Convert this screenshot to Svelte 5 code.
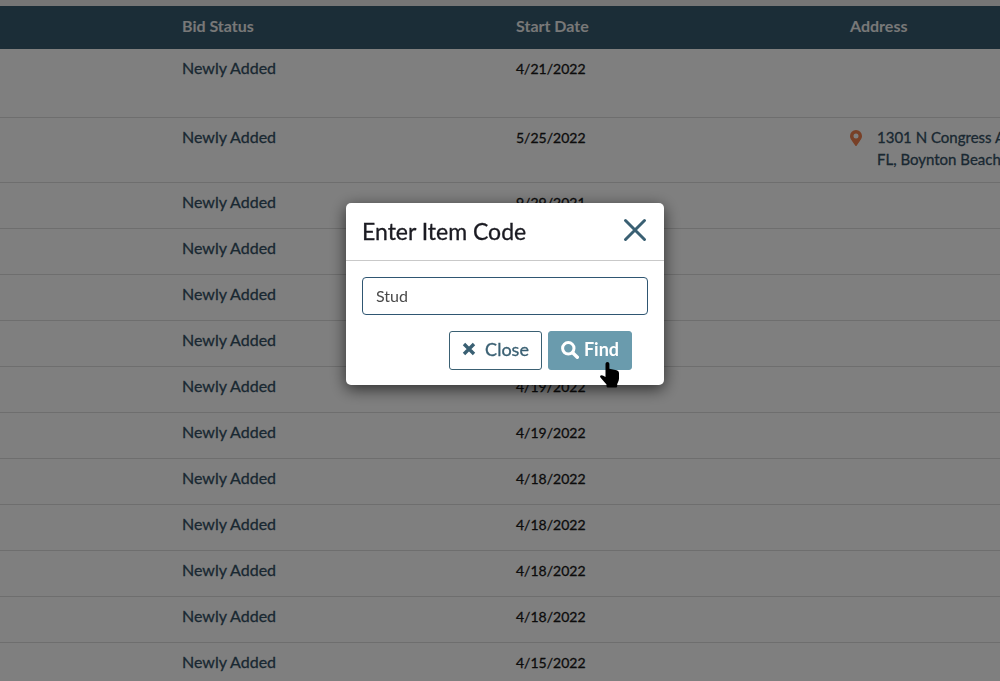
<script>
  const columns = ['Bid Status', 'Start Date', 'Address'];
  const dates = [
    '4/21/2022', '5/25/2022', '9/29/2021', '4/19/2022', '4/19/2022', '4/19/2022', '4/19/2022',
    '4/19/2022', '4/18/2022', '4/18/2022', '4/18/2022', '4/18/2022', '4/15/2022'
  ];
  const bids = dates.map((date, i) => ({
    date,
    status: 'Newly Added',
    tall: i === 0,
    address: i === 1 ? ['1301 N Congress Ave,', 'FL, Boynton Beach'] : null
  }));
  let code = $state('Stud');
</script>

<main>
  <table>
    <thead>
      <tr>
        <td class="lead"></td>
        {#each columns as column}
          <th scope="col">{column}</th>
        {/each}
      </tr>
    </thead>
    <tbody>
      {#each bids as bid}
        <tr class:tall={bid.tall}>
          <td class="lead"></td>
          <td>{bid.status}</td>
          <td class="date">{bid.date}</td>
          <td>
            {#if bid.address}
              <div class="address">
                <svg viewBox="0 0 12 16" width="12" height="16" aria-hidden="true">
                  <path fill="#f0804e" fill-rule="evenodd" d="M6 0a6 6 0 0 0-6 6c0 2.300.7 3 5.400 9.700a.7.7 0 0 0 1.200 0C11.300 9 12 8.300 12 6a6 6 0 0 0-6-6zm0 3.500a2.500 2.500 0 1 1 0 5 2.500 2.500 0 0 1 0-5z" />
                </svg>
                <span>{bid.address[0]}<br />{bid.address[1]}</span>
              </div>
            {/if}
          </td>
        </tr>
      {/each}
    </tbody>
  </table>
</main>

<div class="backdrop">
  <form class="dialog" role="dialog" aria-modal="true" aria-labelledby="dialog-title">
    <header>
      <h2 id="dialog-title">Enter Item Code</h2>
      <button type="button" class="dismiss" aria-label="Dismiss">
        <svg viewBox="0 0 24 24" width="24" height="24" aria-hidden="true">
          <path d="M2.500 2.500 21.500 21.500M21.500 2.500 2.500 21.500" fill="none" stroke="#3a6073" stroke-width="3" stroke-linecap="round" />
        </svg>
      </button>
    </header>
    <div class="content">
      <input type="text" aria-label="Item code" bind:value={code} />
      <div class="actions">
        <button type="button" class="close">
          <svg viewBox="0 0 14 14" width="14" height="14" aria-hidden="true">
            <path d="M2 2 12 12M12 2 2 12" fill="none" stroke="currentColor" stroke-width="3.400" />
          </svg>
          Close
        </button>
        <button type="button" class="find">
          <svg viewBox="0 0 18 18" width="18" height="18" aria-hidden="true">
            <circle cx="7.300" cy="7.300" r="5.700" fill="none" stroke="currentColor" stroke-width="3" />
            <path d="m11.700 11.700 4.600 4.600" fill="none" stroke="currentColor" stroke-width="3.400" stroke-linecap="round" />
          </svg>
          Find
          <svg class="pointer" viewBox="0 0 20 26" width="20" height="26" aria-hidden="true">
            <path d="M5.500 2.200C5.500.7 6.400 0 7.400 0s2 .8 2 2.200v4.600l7.200 1.500c1.500.4 2.400 1.400 2.400 3v5.200c0 1.300-.3 2.300-1 3.700l-.8 1.800V24c0 1-.6 1.600-1.600 1.600H8c-1 0-1.500-.6-1.500-1.500v-1.700L1.300 16.500C.5 15.600-.3 14.700.3 13.800c.7-1 2.100-.7 3 0l2.200 1.300z" />
          </svg>
        </button>
      </div>
    </div>
  </form>
</div>

<style>
  :global(body) {
    overflow: hidden;
    background: #fff;
    font-family: Lato, "Open Sans", sans-serif;
    font-size: 16px;
    line-height: 22px;
  }
  main {
    height: 100vh;
    overflow: hidden;
    border-top: 6px solid #ececec;
    box-sizing: border-box;
    color: #345064;
  }
  table {
    width: 116.8%;
    table-layout: fixed;
    border-collapse: separate;
    border-spacing: 0;
  }
  .lead {
    width: 166px;
    box-sizing: border-box;
  }
  thead td, th {
    height: 43px;
    box-sizing: border-box;
    padding: 0 16px 4px;
    background: #365a6e;
    color: #f0f0f0;
    font-weight: 700;
    text-align: left;
    vertical-align: middle;
  }
  tbody td {
    height: 46px;
    box-sizing: border-box;
    padding: 8px 16px 12px;
    border-bottom: 1px solid #dcdcdc;
    vertical-align: top;
    -webkit-text-stroke: 0.3px currentColor;
  }
  .tall td {
    height: 69px;
  }
  tbody .date {
    padding-top: 9px;
    color: #181818;
    font-size: 14px;
  }
  .address {
    display: flex;
    gap: 15px;
    font-size: 15px;
    white-space: nowrap;
  }
  .address svg {
    margin-top: 4px;
  }
  .backdrop {
    position: fixed;
    inset: 0;
    display: flex;
    justify-content: center;
    align-items: flex-start;
    padding: 203px 0 0 10px;
    background: rgba(0, 0, 0, 0.5);
  }
  .dialog {
    width: 318px;
    border-radius: 5px;
    background: #fff;
    box-shadow: 0 4px 16px rgba(0, 0, 0, 0.65);
  }
  header {
    display: flex;
    align-items: center;
    justify-content: space-between;
    height: 57px;
    padding: 0 16px;
    border-bottom: 1px solid #c9c9c9;
  }
  h2 {
    margin: 0;
    padding-bottom: 2px;
    color: #1b1b22;
    font-size: 23px;
    font-weight: 400;
    line-height: 28px;
    -webkit-text-stroke: 0.3px currentColor;
  }
  button, input {
    box-sizing: border-box;
    font-family: inherit;
  }
  .dismiss {
    display: flex;
    margin: 0 1px 4px 0;
    padding: 0;
    border: 0;
    background: none;
  }
  .content {
    padding: 16px 16px 15px;
  }
  input {
    display: block;
    width: 100%;
    height: 38px;
    padding: 0 13px 2px;
    border: 1px solid #2f5672;
    border-radius: 4px;
    background: #fff;
    color: #494949;
    font-size: 16px;
    outline: none;
  }
  .actions {
    display: flex;
    justify-content: flex-end;
    gap: 6px;
    padding: 16px 16px 0 0;
  }
  .actions button {
    position: relative;
    display: flex;
    align-items: center;
    height: 39px;
    padding: 0 12px 4px;
    border: 1px solid #3a6073;
    border-radius: 3px;
    font-size: 18px;
    line-height: 24px;
  }
  .close {
    gap: 9px;
    background: #fff;
    color: #3a6073;
    -webkit-text-stroke: 0.3px currentColor;
  }
  .actions .find {
    gap: 5px;
    border-color: #6a9bad;
    background: #6a9bad;
    color: #fff;
    font-weight: 700;
  }
  .find svg:first-child {
    margin-top: 3px;
  }
  .pointer {
    position: absolute;
    left: 51px;
    top: 30px;
    fill: #000;
  }
</style>
